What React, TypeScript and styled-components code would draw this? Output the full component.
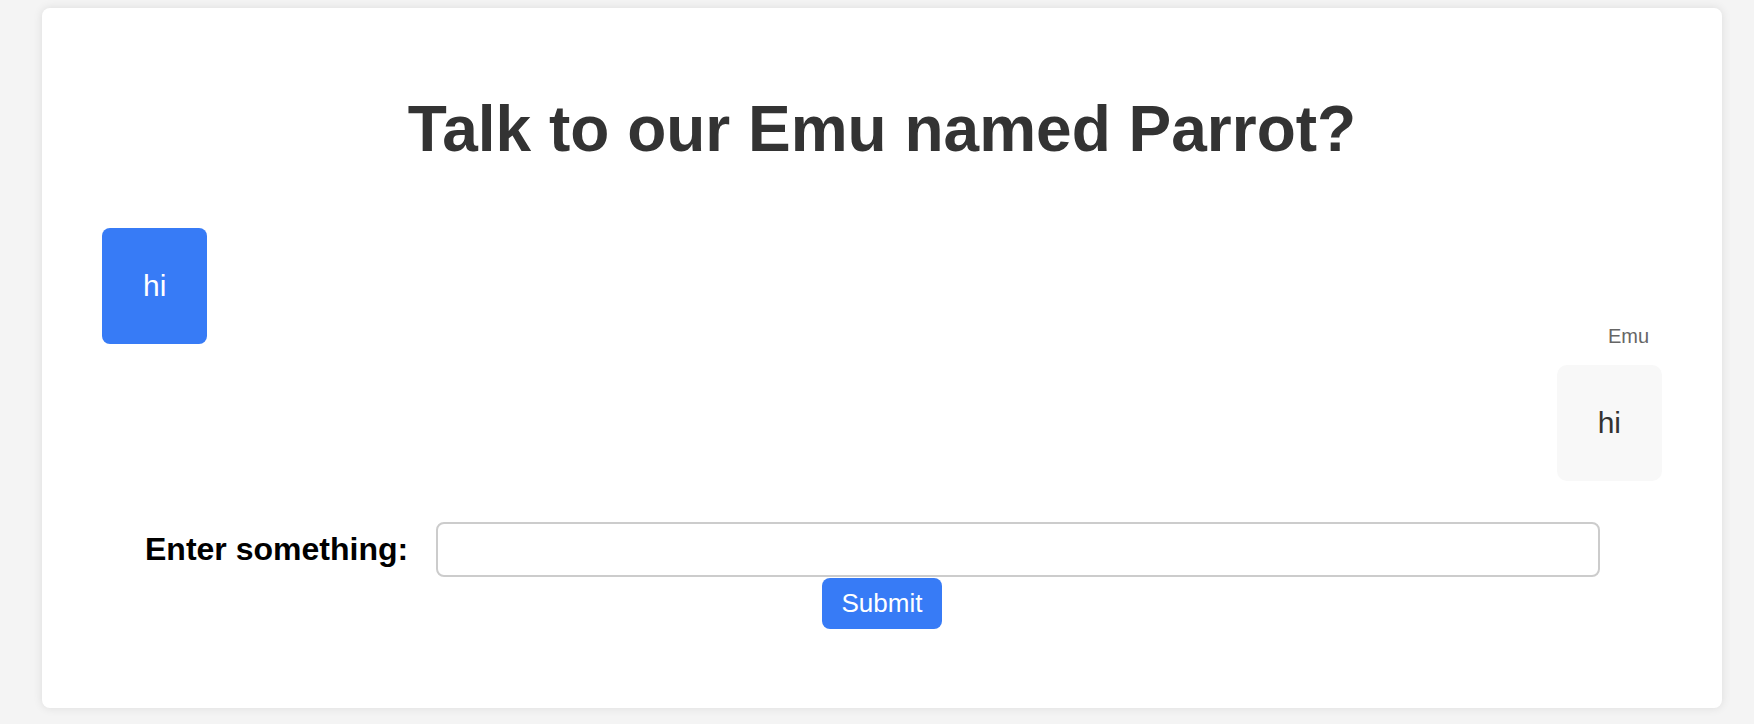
import React, { useState } from 'react';
import styled, { createGlobalStyle } from 'styled-components';

const GlobalStyle = createGlobalStyle`
    html, body {
        margin: 0;
        padding: 0;
        background: #f4f4f4;
        font-family: "Liberation Sans", Arial, Helvetica, sans-serif;
    }
`;

const Page = styled.div`
    padding: 8px 32px 16px 42px;
`;

const Card = styled.div`
    background: #ffffff;
    border-radius: 8px;
    box-shadow: 0 0 10px rgba(0, 0, 0, 0.1);
    padding: 84px 60px 79px;
    display: flex;
    flex-direction: column;
`;

const Title = styled.h1`
    margin: 0 0 62px 0;
    text-align: center;
    font-size: 64px;
    line-height: 74px;
    font-weight: 700;
    color: #333333;
`;

const ChatList = styled.div`
    display: flex;
    flex-direction: column;
    gap: 21px;
`;

const MessageRow = styled.div<{ $fromUser: boolean }>`
    display: flex;
    justify-content: ${props => (props.$fromUser ? 'flex-start' : 'flex-end')};
`;

const Bubble = styled.div<{ $fromUser: boolean }>`
    position: relative;
    padding: 42px 41px;
    font-size: 30px;
    line-height: 32px;
    border-radius: ${props => (props.$fromUser ? '8px' : '10px')};
    background: ${props => (props.$fromUser ? '#377bf6' : '#f8f8f8')};
    color: ${props => (props.$fromUser ? '#ffffff' : '#333333')};
`;

const SenderName = styled.span`
    position: absolute;
    right: 13px;
    bottom: calc(100% + 17px);
    font-size: 20px;
    line-height: 23px;
    color: #666666;
    white-space: nowrap;
`;

const Form = styled.form`
    margin-top: 41px;
    display: flex;
    flex-direction: column;
    align-items: center;
`;

const InputRow = styled.div`
    align-self: stretch;
    display: flex;
    align-items: center;
    padding: 0 62px 0 43px;
`;

const Label = styled.label`
    font-size: 32px;
    font-weight: 700;
    color: #000000;
    margin-right: 28px;
    white-space: nowrap;
`;

const TextInput = styled.input`
    flex: 1;
    height: 55px;
    box-sizing: border-box;
    border: 2px solid #cccccc;
    border-radius: 8px;
    padding: 0 14px;
    font-size: 24px;
    font-family: inherit;
    outline: none;
`;

const SubmitButton = styled.button`
    margin-top: 1px;
    background: #377bf6;
    color: #ffffff;
    border: none;
    border-radius: 8px;
    padding: 10px 20px;
    font-size: 26px;
    line-height: 31px;
    font-family: inherit;
    cursor: pointer;
`;

interface Message {
    id: number;
    fromUser: boolean;
    text: string;
}

const messages: Message[] = [
    { id: 1, fromUser: true, text: 'hi' },
    { id: 2, fromUser: false, text: 'hi' },
];

const App = () => {
    const [value, setValue] = useState('');

    return (
        <>
            <GlobalStyle />
            <Page>
                <Card>
                    <Title>Talk to our Emu named Parrot?</Title>
                    <ChatList>
                        {messages.map(message => (
                            <MessageRow key={message.id} $fromUser={message.fromUser}>
                                <Bubble $fromUser={message.fromUser}>
                                    {!message.fromUser && <SenderName>Emu</SenderName>}
                                    {message.text}
                                </Bubble>
                            </MessageRow>
                        ))}
                    </ChatList>
                    <Form onSubmit={e => e.preventDefault()}>
                        <InputRow>
                            <Label htmlFor="prompt">Enter something:</Label>
                            <TextInput
                                id="prompt"
                                value={value}
                                onChange={e => setValue(e.target.value)}
                            />
                        </InputRow>
                        <SubmitButton type="submit">Submit</SubmitButton>
                    </Form>
                </Card>
            </Page>
        </>
    );
};

export default App;
